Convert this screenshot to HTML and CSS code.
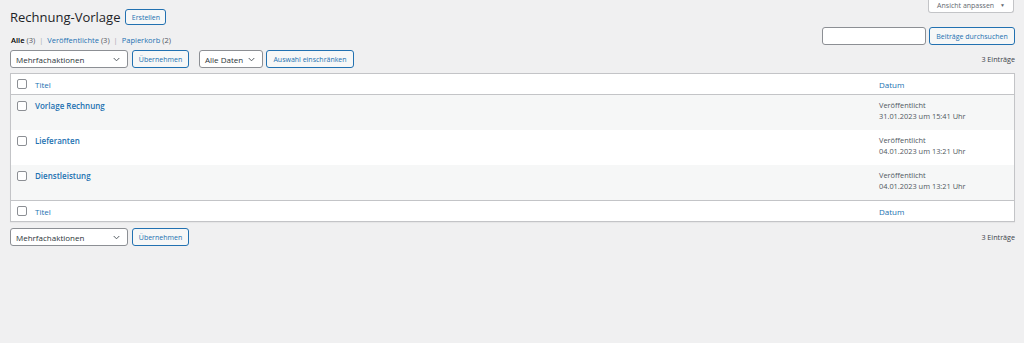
FILE: index.html
```html
<!DOCTYPE html>
<html lang="de">
<head>
    <meta charset="UTF-8">
    <title>Rechnung-Vorlage</title>
    <link rel="stylesheet" href="styles.css">
</head>
<body>
    <div class="wrap">
        <div class="top-row">
            <div class="page-title">
                <h1>Rechnung-Vorlage</h1>
                <a class="button" href="#">Erstellen</a>
            </div>
            <button class="screen-options">Ansicht anpassen <span class="arrow">&#9660;</span></button>
        </div>

        <div class="filter-row">
            <ul class="subsubsub">
                <li class="current">Alle <span class="count">(3)</span></li>
                <li class="sep">|</li>
                <li><a href="#">Veröffentlichte <span class="count">(3)</span></a></li>
                <li class="sep">|</li>
                <li><a href="#">Papierkorb <span class="count">(2)</span></a></li>
            </ul>
            <div class="search-box">
                <input type="search" class="search-input">
                <a class="button" href="#">Beiträge durchsuchen</a>
            </div>
        </div>

        <!-- top tablenav -->
        <div class="tablenav">
            <div class="actions">
                <div class="select bulk">
                    <span>Mehrfachaktionen</span>
                    <svg class="chevron" viewBox="0 0 8 5" width="7" height="5"><polyline points="0.8,0.8 4,4 7.2,0.8" fill="none" stroke="#50575e" stroke-width="1.1"/></svg>
                </div>
                <a class="button apply" href="#">Übernehmen</a>
            </div>
            <div class="actions">
                <div class="select dates">
                    <span>Alle Daten</span>
                    <svg class="chevron" viewBox="0 0 8 5" width="7" height="5"><polyline points="0.8,0.8 4,4 7.2,0.8" fill="none" stroke="#50575e" stroke-width="1.1"/></svg>
                </div>
                <a class="button filter" href="#">Auswahl einschränken</a>
            </div>
            <div class="displaying-num">3 Einträge</div>
        </div>

        <table class="list-table">
            <thead>
                <tr>
                    <th class="check-column"><span class="cb"></span></th>
                    <th class="column-title"><a href="#">Titel</a></th>
                    <th class="column-date"><a href="#">Datum</a></th>
                </tr>
            </thead>
            <tbody>
                <tr class="alt">
                    <td class="check-column"><span class="cb"></span></td>
                    <td class="column-title"><a class="row-title" href="#">Vorlage Rechnung</a></td>
                    <td class="column-date">Veröffentlicht<br>31.01.2023 um 15:41 Uhr</td>
                </tr>
                <tr>
                    <td class="check-column"><span class="cb"></span></td>
                    <td class="column-title"><a class="row-title" href="#">Lieferanten</a></td>
                    <td class="column-date">Veröffentlicht<br>04.01.2023 um 13:21 Uhr</td>
                </tr>
                <tr class="alt">
                    <td class="check-column"><span class="cb"></span></td>
                    <td class="column-title"><a class="row-title" href="#">Dienstleistung</a></td>
                    <td class="column-date">Veröffentlicht<br>04.01.2023 um 13:21 Uhr</td>
                </tr>
            </tbody>
            <tfoot>
                <tr>
                    <th class="check-column"><span class="cb"></span></th>
                    <th class="column-title"><a href="#">Titel</a></th>
                    <th class="column-date"><a href="#">Datum</a></th>
                </tr>
            </tfoot>
        </table>

        <!-- bottom tablenav -->
        <div class="tablenav bottom">
            <div class="actions">
                <div class="select bulk">
                    <span>Mehrfachaktionen</span>
                    <svg class="chevron" viewBox="0 0 8 5" width="7" height="5"><polyline points="0.8,0.8 4,4 7.2,0.8" fill="none" stroke="#50575e" stroke-width="1.1"/></svg>
                </div>
                <a class="button apply" href="#">Übernehmen</a>
            </div>
            <div class="displaying-num">3 Einträge</div>
        </div>
    </div>
</body>
</html>
```

FILE: styles.css
```css
* {
    margin: 0;
    padding: 0;
    box-sizing: border-box;
}

body {
    font-family: 'Segoe UI', 'Open Sans', sans-serif;
    font-size: 8px;
    color: #3c434a;
    background: #f0f0f1;
}

a {
    color: #2271b1;
    text-decoration: none;
}

.wrap {
    padding: 0 9px 0 10px;
}

.top-row {
    display: flex;
    justify-content: space-between;
    align-items: flex-start;
}

.page-title {
    display: flex;
    align-items: center;
    gap: 5px;
    margin-top: 9px;
    height: 16px;
}

.page-title h1 {
    font-size: 13px;
    font-weight: 400;
    color: #1d2327;
    line-height: 16px;
}

.page-title .button {
    height: 16px;
    width: 41px;
}

.screen-options {
    font-family: inherit;
    font-size: 7px;
    color: #646970;
    background: #fff;
    border: 1px solid #c3c4c7;
    border-top: none;
    border-radius: 0 0 3px 3px;
    height: 13px;
    width: 86px;
    margin-right: 1px;
    padding: 0 0 1px 0;
}

.screen-options .arrow {
    font-size: 5px;
    margin-left: 4px;
    vertical-align: 1px;
}

.button {
    display: inline-flex;
    align-items: center;
    justify-content: center;
    height: 18px;
    padding: 0 4px;
    border: 1px solid #2271b1;
    border-radius: 3px;
    background: #f6f7f7;
    color: #2271b1;
    font-size: 7px;
    white-space: nowrap;
}

.filter-row {
    display: flex;
    justify-content: space-between;
    align-items: flex-start;
    margin-top: 2px;
}

.subsubsub {
    list-style: none;
    display: flex;
    gap: 4px;
    margin-top: 8px;
    padding-left: 1px;
    font-size: 7.5px;
    line-height: 10px;
    color: #50575e;
}

.subsubsub .current {
    color: #000;
    font-weight: 600;
}

.subsubsub .count {
    font-weight: 400;
    color: #50575e;
}

.subsubsub .sep {
    color: #a7aaad;
}

.search-box {
    display: flex;
    gap: 3px;
}

.search-input {
    width: 104px;
    height: 18px;
    border: 1px solid #8c8f94;
    border-radius: 3px;
    background: #fff;
}

.search-box .button {
    width: 86px;
}

.tablenav {
    display: flex;
    align-items: center;
    height: 18px;
    margin-top: 5px;
}

.tablenav.bottom {
    margin-top: 6px;
}

.actions {
    display: flex;
    gap: 3px;
    margin-right: 10px;
}

.actions .apply {
    width: 57px;
}

.actions .filter {
    width: 88px;
}

.select {
    display: flex;
    align-items: center;
    justify-content: space-between;
    height: 18px;
    padding: 0 7px 0 5px;
    background: #fff;
    border: 1px solid #8c8f94;
    border-radius: 3px;
    color: #2c3338;
}

.select.bulk {
    width: 118px;
    margin-right: 1px;
}

.select.dates {
    width: 64px;
}

.displaying-num {
    margin-left: auto;
    font-size: 7.2px;
    color: #3c434a;
}

.list-table {
    width: 100%;
    margin-top: 5px;
    border: 1px solid #c3c4c7;
    border-spacing: 0;
    table-layout: fixed;
    background: #fff;
    box-shadow: 0 1px 1px rgba(0, 0, 0, 0.04);
}

.list-table th {
    font-weight: 400;
    text-align: left;
    height: 21px;
    vertical-align: middle;
}

.list-table thead th {
    border-bottom: 1px solid #c3c4c7;
}

.list-table tfoot th {
    border-top: 1px solid #c3c4c7;
}

.list-table td {
    height: 35px;
    vertical-align: top;
    padding-top: 5px;
    line-height: 11px;
}

.list-table tr.alt td {
    background: #f6f7f7;
}

.check-column {
    width: 24px;
    padding-left: 6px;
}

.list-table td.check-column {
    padding-top: 6px;
}

.cb {
    display: block;
    width: 10px;
    height: 10px;
    border: 1px solid #8c8f94;
    border-radius: 2px;
    background: #fff;
}

.column-date {
    width: 135px;
    color: #50575e;
}

.list-table td.column-date {
    font-size: 7.4px;
}

.row-title {
    font-weight: 600;
}
```
